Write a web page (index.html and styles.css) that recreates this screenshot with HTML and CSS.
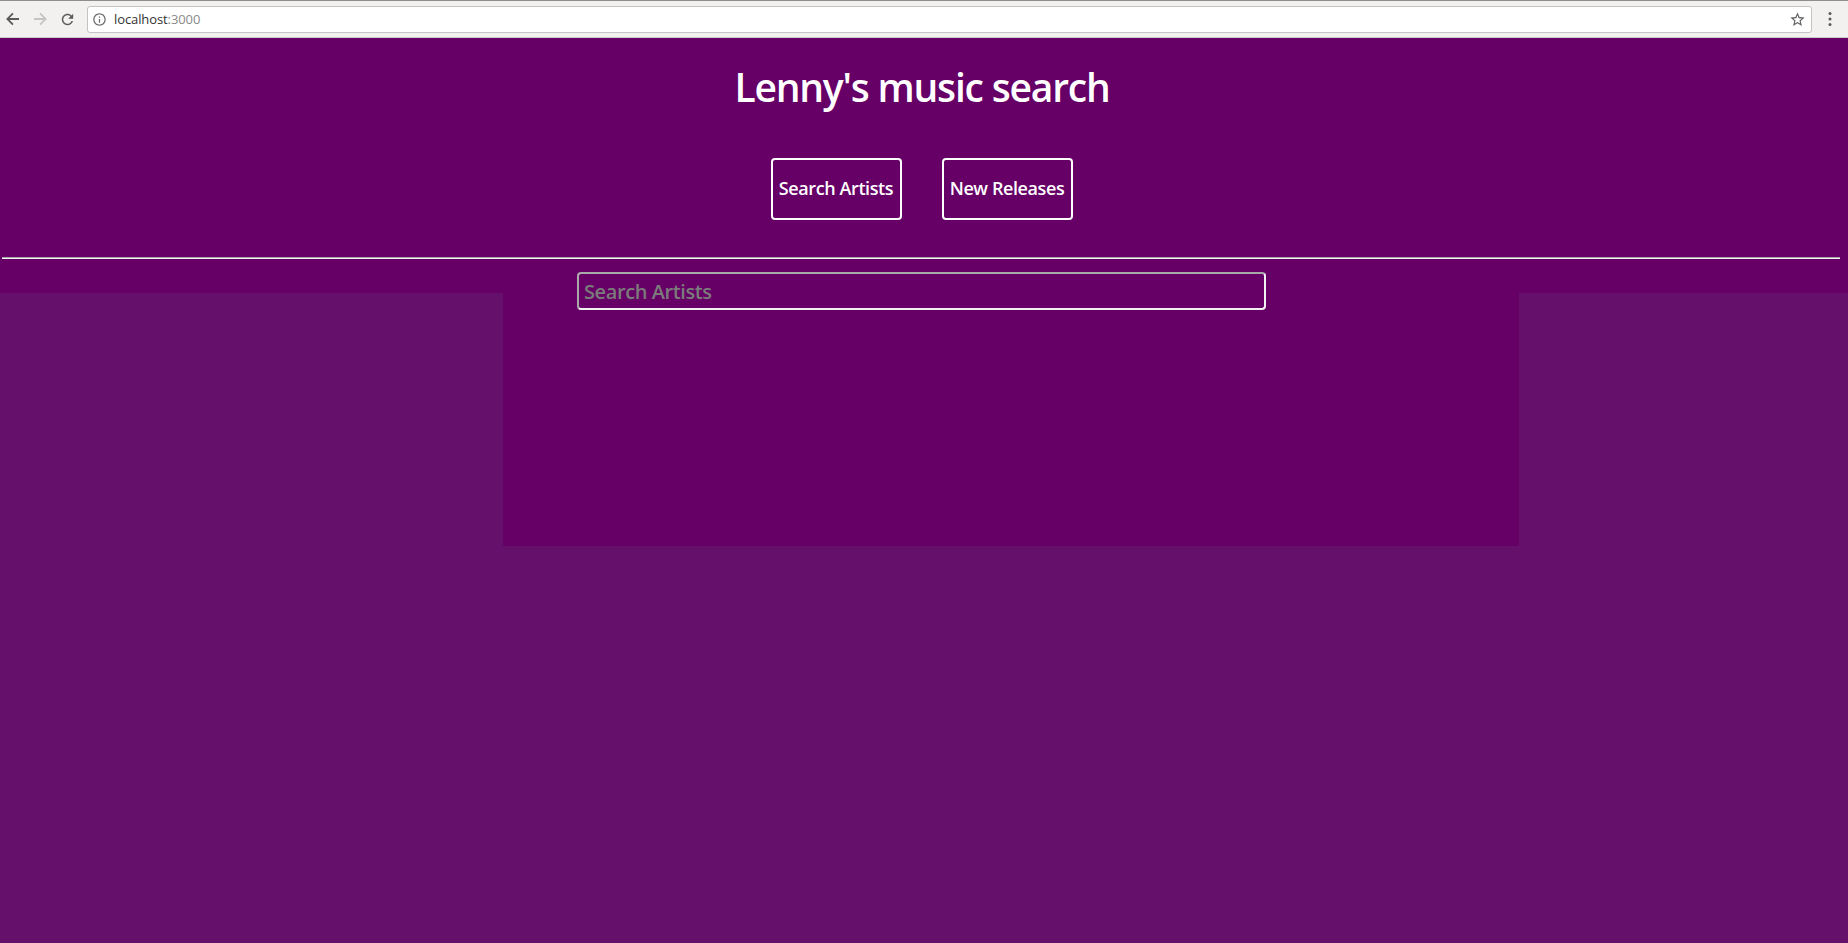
FILE: index.html
```html
<!DOCTYPE html>
<html lang="en">
<head>
<meta charset="utf-8">
<title>Lenny's music search</title>
<link rel="stylesheet" href="styles.css">
</head>
<body>
<div class="browser-bar">
  <div class="nav-icons">
    <svg class="nav-icon" viewBox="0 0 16 16" width="16" height="16"><path fill="#5a5a5a" d="M14 7.1H4.6l4-4L7.3 1.8 1.1 8l6.2 6.2 1.3-1.3-4-4H14z"/></svg>
    <svg class="nav-icon" viewBox="0 0 16 16" width="16" height="16"><path fill="#c4c4c4" d="M2 7.1h9.4l-4-4 1.3-1.3L14.9 8l-6.2 6.2-1.3-1.3 4-4H2z"/></svg>
    <svg class="nav-icon" viewBox="0 0 24 24" width="17" height="17"><path fill="#5a5a5a" d="M17.65 6.35C16.2 4.9 14.21 4 12 4c-4.42 0-7.990 3.58-7.99 8s3.57 8 7.99 8c3.73 0 6.84-2.55 7.73-6h-2.08c-.82 2.33-3.04 4-5.65 4-3.31 0-6-2.69-6-6s2.69-6 6-6c1.66 0 3.14.69 4.22 1.78L13 11h7V4l-2.35 2.35z"/></svg>
  </div>
  <div class="omnibox">
    <svg class="info-icon" viewBox="0 0 24 24" width="15" height="15"><path fill="#6a6a6a" d="M11 7h2v2h-2zm0 4h2v6h-2zm1-9C6.48 2 2 6.48 2 12s4.48 10 10 10 10-4.48 10-10S17.52 2 12 2zm0 18c-4.41 0-8-3.59-8-8s3.59-8 8-8 8 3.590 8 8-3.59 8-8 8z"/></svg>
    <span class="url">localhost<span class="port">:3000</span></span>
    <svg class="star-icon" viewBox="0 0 24 24" width="17" height="17"><path fill="#5f5f5f" d="M22 9.24l-7.19-.62L12 2 9.19 8.63 2 9.24l5.46 4.73L5.82 21 12 17.27 18.18 21l-1.63-7.03L22 9.24zM12 15.4l-3.76 2.27 1-4.28-3.32-2.88 4.38-.38L12 6.1l1.71 4.04 4.38.38-3.32 2.88 1 4.28L12 15.4z"/></svg>
  </div>
  <div class="menu">
    <svg viewBox="0 0 4 16" width="4" height="16"><circle cx="2" cy="2.5" r="1.5" fill="#5a5a5a"/><circle cx="2" cy="8" r="1.5" fill="#5a5a5a"/><circle cx="2" cy="13.5" r="1.5" fill="#5a5a5a"/></svg>
  </div>
</div>

<div class="app">
  <header class="hero">
    <h1 class="title">Lenny's music search</h1>
    <nav class="tabs">
      <button class="tab">Search Artists</button>
      <button class="tab">New Releases</button>
    </nav>
    <hr class="divider">
    <input class="search" type="text" placeholder="Search Artists">
  </header>
  <main class="results"></main>
</div>
</body>
</html>
```

FILE: styles.css
```css
* { box-sizing: border-box; }

html, body {
  margin: 0;
  padding: 0;
}

body {
  background: #65106a;
  min-height: 943px;
  font-family: "Open Sans", "Noto Sans", sans-serif;
}

/* browser chrome */
.browser-bar {
  height: 38px;
  background: #f2f1f0;
  border-top: 1px solid #8e8e8e;
  border-bottom: 1px solid #c9c9c9;
  display: flex;
  align-items: center;
}

.nav-icons {
  display: flex;
  align-items: center;
  gap: 11px;
  padding-left: 5px;
}

.nav-icon { display: block; }

.omnibox {
  flex: 1;
  height: 27px;
  margin-left: 11px;
  background: #fff;
  border: 1px solid #c3c3c3;
  border-radius: 3px;
  display: flex;
  align-items: center;
  padding: 0 5px 0 4px;
}

.info-icon { display: block; }

.url {
  margin-left: 7px;
  font-size: 13px;
  color: #333;
  flex: 1;
  letter-spacing: -0.1px;
}

.port { color: #8a8a8a; }

.star-icon { display: block; }

.menu {
  width: 36px;
  display: flex;
  justify-content: center;
  align-items: center;
}

.menu svg { display: block; }

/* app */
.hero {
  background: #660066;
  display: flex;
  flex-direction: column;
  align-items: center;
  color: #fff;
}

.title {
  margin: 25px 0 0 -4px;
  font-size: 39px;
  line-height: 48px;
  font-weight: 600;
  letter-spacing: -1.2px;
}

.tabs {
  display: flex;
  gap: 40px;
  margin-top: 47px;
  margin-left: -5px;
}

.tab {
  width: 131px;
  height: 62px;
  padding: 0 0 3px;
  background: transparent;
  border: 2px solid #fff;
  border-radius: 4px;
  color: #fff;
  font-family: "Open Sans", "Noto Sans", sans-serif;
  font-size: 18px;
  font-weight: 600;
  letter-spacing: -0.4px;
  display: flex;
  align-items: center;
  justify-content: center;
}

.divider {
  align-self: stretch;
  margin: 37px 8px 0 2px;
  height: 0;
  border: 0;
  border-top: 1px solid #a6a6a6;
  border-bottom: 1px solid #f4f4f4;
}

.search {
  width: 689px;
  height: 38px;
  margin: 13px 0 -17px -5px;
  padding: 0 5px;
  background: transparent;
  border: 2px solid;
  border-color: #a9a9a9 #f2f2f2 #f2f2f2 #a9a9a9;
  border-radius: 4px;
  color: #fff;
  font-family: "Open Sans", "Noto Sans", sans-serif;
  font-size: 20px;
  font-weight: 600;
  letter-spacing: -0.4px;
}

.search::placeholder { color: #7b7b7b; }

.results {
  margin-left: 503px;
  width: 1016px;
  height: 253px;
  background: #660066;
}
```
